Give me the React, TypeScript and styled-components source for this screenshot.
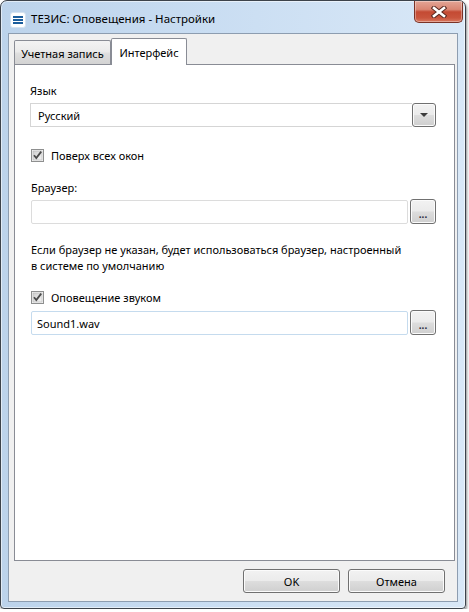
import React from "react";
import styled, { createGlobalStyle } from "styled-components";

const Global = createGlobalStyle`
  html, body { margin: 0; padding: 0; background: #ffffff; }
  body {
    font-family: "Noto Sans", "Segoe UI", sans-serif;
    font-size: 11px;
    color: #000;
  }
  #root { padding: 0; }
`;

const Window = styled.div`
  box-sizing: border-box;
  width: 466px;
  height: 609px;
  border: 1px solid #3d434b;
  border-radius: 7px 7px 4px 4px;
  background: linear-gradient(to right, #bcd3eb 0%, #c9ddf2 45%, #d9e8f7 100%);
  box-shadow: inset 0 0 0 1px rgba(255, 255, 255, 0.55), 1px 2px 3px rgba(0, 0, 0, 0.45);
  display: flex;
  flex-direction: column;
  overflow: hidden;
`;

const TitleBar = styled.div`
  height: 32px;
  flex: none;
  display: flex;
  align-items: flex-start;
`;

const AppIcon = styled.div`
  margin: 11px 0 0 9px;
  width: 16px;
  height: 16px;
  flex: none;
  display: flex;
`;

const Title = styled.div`
  margin: 10px 0 0 5px;
  line-height: 16px;
  font-size: 11.5px;
  color: #000;
  white-space: nowrap;
`;

const CloseButton = styled.div`
  margin-left: auto;
  margin-right: 2px;
  width: 49px;
  height: 22px;
  box-sizing: border-box;
  border: 1px solid #7a3226;
  border-top: none;
  border-radius: 0 0 5px 5px;
  background: linear-gradient(#e3a596 0%, #d98673 40%, #c44a33 52%, #c9553d 80%, #d9785f 100%);
  box-shadow: inset 0 0 0 1px rgba(255, 255, 255, 0.35);
  display: flex;
  align-items: center;
  justify-content: center;
`;

const Client = styled.div`
  flex: 1;
  margin: 0 7px 6px 7px;
  border: 1px solid #8d9db0;
  background: #f0f0f0;
  display: flex;
  flex-direction: column;
  padding: 4px 2px 9px 5px;
  min-height: 0;
`;

const TabStrip = styled.div`
  height: 26px;
  display: flex;
  align-items: flex-end;
  flex: none;
`;

const Tab = styled.div<{ $active?: boolean; $w: number }>`
  box-sizing: border-box;
  width: ${(p) => p.$w}px;
  height: ${(p) => (p.$active ? 27 : 24)}px;
  margin-bottom: ${(p) => (p.$active ? -1 : 0)}px;
  border: 1px solid #898c95;
  border-bottom: none;
  border-radius: 2px 2px 0 0;
  background: ${(p) =>
    p.$active
      ? "#ffffff"
      : "linear-gradient(#f3f3f3 0%, #ebebeb 45%, #dedede 55%, #d3d3d3 100%)"};
  position: relative;
  z-index: ${(p) => (p.$active ? 2 : 1)};
  display: flex;
  align-items: center;
  justify-content: center;
  padding-top: ${(p) => (p.$active ? 0 : 2)}px;
  white-space: nowrap;
  color: #000;
`;

const Panel = styled.div`
  box-sizing: border-box;
  height: 497px;
  flex: none;
  border: 1px solid #898c95;
  background: #ffffff;
  padding: 18px 18px 0 15px;
  display: flex;
  flex-direction: column;
`;

const Label = styled.div<{ $mt?: number; $ml?: number }>`
  margin-top: ${(p) => p.$mt ?? 0}px;
  margin-left: ${(p) => p.$ml ?? 0}px;
  line-height: 16px;
  color: #000;
`;

const Combo = styled.div<{ $mt?: number }>`
  margin-top: ${(p) => p.$mt ?? 0}px;
  height: 24px;
  display: flex;
  align-items: stretch;
`;

const ComboText = styled.div`
  flex: 1;
  box-sizing: border-box;
  border: 1px solid #d5d5d5;
  border-right: none;
  background: #fff;
  padding-left: 7px;
  display: flex;
  align-items: center;
`;

const GlassButton = styled.div<{ $w: number; $h: number }>`
  box-sizing: border-box;
  width: ${(p) => p.$w}px;
  height: ${(p) => p.$h}px;
  flex: none;
  border: 1px solid #707070;
  border-radius: 3px;
  background: linear-gradient(#f2f2f2 0%, #ebebeb 48%, #dddddd 52%, #cfcfcf 100%);
  box-shadow: inset 0 0 0 1px #fbfbfb;
  display: flex;
  align-items: center;
  justify-content: center;
  color: #000;
`;

const Dots = styled.span`
  font-size: 10px;
  line-height: 12px;
  margin-top: 4px;
  font-weight: 700;
  color: #2a2a40;
`;

const Arrow = styled.div`
  width: 0;
  height: 0;
  border-left: 4px solid transparent;
  border-right: 4px solid transparent;
  border-top: 4px solid #3c3c3c;
`;

const CheckRow = styled.div<{ $mt?: number }>`
  margin-top: ${(p) => p.$mt ?? 0}px;
  margin-left: 1px;
  height: 16px;
  display: flex;
  align-items: center;
  gap: 7px;
`;

const FieldRow = styled.div<{ $mt?: number }>`
  margin-top: ${(p) => p.$mt ?? 0}px;
  margin-left: 1px;
  height: 25px;
  display: flex;
  align-items: flex-end;
  gap: 2px;
`;

const TextBox = styled.div<{ $focus?: boolean }>`
  flex: 1;
  box-sizing: border-box;
  height: 24px;
  border: 1px solid ${(p) => (p.$focus ? "#c5dbee" : "#dcdcdc")};
  border-radius: 2px;
  background: #fff;
  padding-left: 5px;
  display: flex;
  align-items: center;
  color: #000;
`;

const HelpText = styled.div<{ $mt?: number }>`
  margin-top: ${(p) => p.$mt ?? 0}px;
  margin-left: 1px;
  line-height: 16px;
  color: #000;
`;

const Footer = styled.div`
  margin-top: 8px;
  padding-right: 10px;
  display: flex;
  justify-content: flex-end;
  gap: 8px;
`;

const CheckBox = () => (
  <svg width="13" height="13" viewBox="0 0 13 13" style={{ flex: "none" }}>
    <defs>
      <linearGradient id="cbg" x1="0" y1="0" x2="1" y2="1">
        <stop offset="0" stopColor="#cfcfcf" />
        <stop offset="1" stopColor="#f4f4f4" />
      </linearGradient>
    </defs>
    <rect x="0.5" y="0.5" width="12" height="12" fill="#f4f4f4" stroke="#8e8f8f" />
    <rect x="2" y="2" width="9" height="9" fill="url(#cbg)" stroke="#b4b4b4" strokeWidth="0.6" />
    <path d="M3 6.2 L5.3 9 L10.2 2.6" fill="none" stroke="#4a4a4a" strokeWidth="1.8" />
  </svg>
);

const MenuIcon = () => (
  <svg width="16" height="16" viewBox="0 0 16 16">
    <rect x="0.5" y="0.5" width="15" height="15" rx="2.5" fill="#ffffff" stroke="#d6e3f0" />
    <rect x="3" y="4" width="10" height="2" fill="#1c5e9c" />
    <rect x="3" y="7" width="10" height="2" fill="#1c5e9c" />
    <rect x="3" y="10" width="10" height="2" fill="#1c5e9c" />
  </svg>
);

const CloseGlyph = () => (
  <svg width="16" height="12" viewBox="0 0 16 12">
    <path d="M3 2 L13 10 M13 2 L3 10" stroke="#5a2a22" strokeWidth="4.6" strokeLinecap="square" />
    <path d="M3 2 L13 10 M13 2 L3 10" stroke="#ffffff" strokeWidth="2.6" strokeLinecap="square" />
  </svg>
);

export default function App() {
  return (
    <>
      <Global />
      <Window>
        <TitleBar>
          <AppIcon>
            <MenuIcon />
          </AppIcon>
          <Title>ТЕЗИС: Оповещения - Настройки</Title>
          <CloseButton>
            <CloseGlyph />
          </CloseButton>
        </TitleBar>
        <Client>
          <TabStrip>
            <Tab $w={97}>Учетная запись</Tab>
            <Tab $w={76} $active>
              Интерфейс
            </Tab>
          </TabStrip>
          <Panel>
            <Label>Язык</Label>
            <Combo $mt={4}>
              <ComboText>Русский</ComboText>
              <GlassButton $w={24} $h={24}>
                <Arrow />
              </GlassButton>
            </Combo>
            <CheckRow $mt={20}>
              <CheckBox />
              <span>Поверх всех окон</span>
            </CheckRow>
            <Label $mt={17} $ml={1}>
              Браузер:
            </Label>
            <FieldRow $mt={3}>
              <TextBox />
              <GlassButton $w={26} $h={25}>
                <Dots>...</Dots>
              </GlassButton>
            </FieldRow>
            <HelpText $mt={18}>
              Если браузер не указан, будет использоваться браузер, настроенный
              <br />в системе по умолчанию
            </HelpText>
            <CheckRow $mt={15}>
              <CheckBox />
              <span>Оповещение звуком</span>
            </CheckRow>
            <FieldRow $mt={5}>
              <TextBox $focus>Sound1.wav</TextBox>
              <GlassButton $w={26} $h={25}>
                <Dots>...</Dots>
              </GlassButton>
            </FieldRow>
          </Panel>
          <Footer>
            <GlassButton $w={97} $h={24}>OK</GlassButton>
            <GlassButton $w={97} $h={24}>Отмена</GlassButton>
          </Footer>
        </Client>
      </Window>
    </>
  );
}
